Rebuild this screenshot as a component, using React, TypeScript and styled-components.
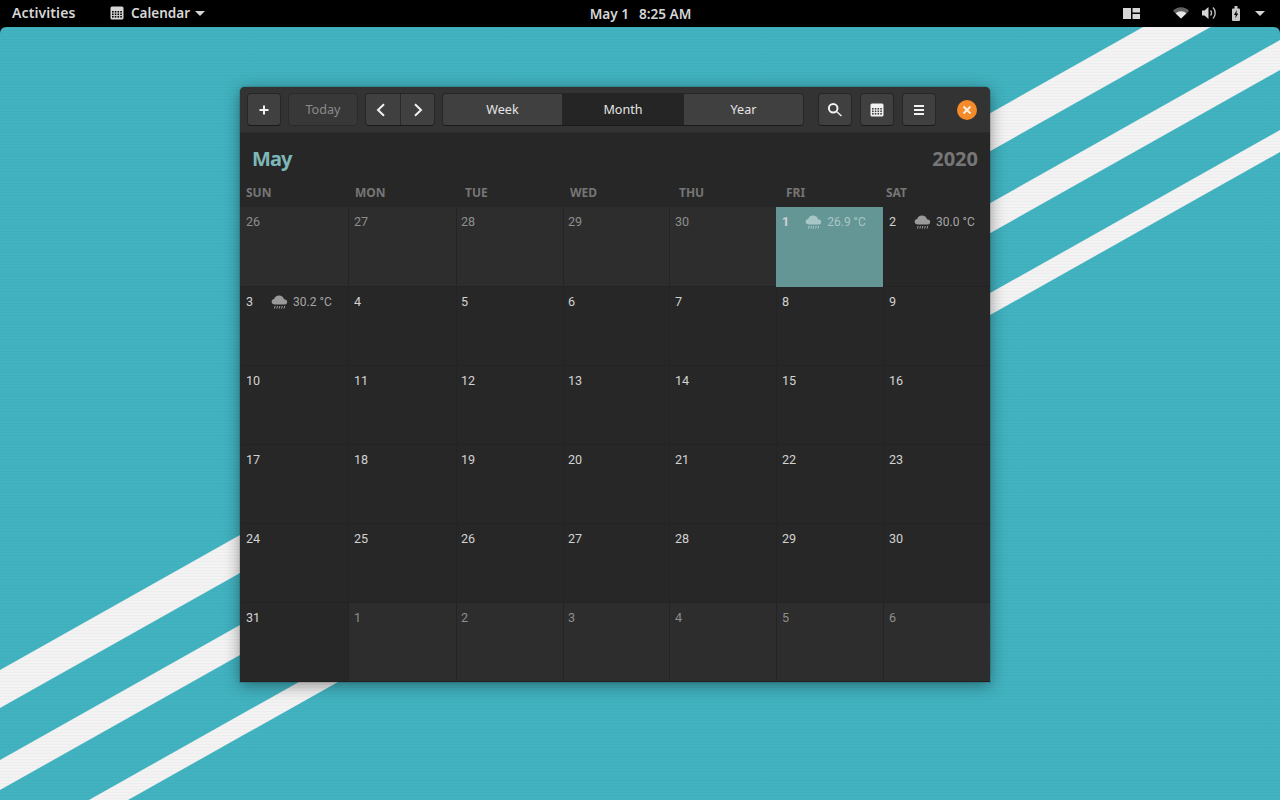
import React from 'react';
import styled, { createGlobalStyle } from 'styled-components';

const Global = createGlobalStyle`
  html, body { margin: 0; padding: 0; height: 100%; background: #000; }
  #root { height: 100%; }
  * { box-sizing: border-box; }
`;

const FONT = `"Noto Sans", "Open Sans", sans-serif`;
const COLUMNS = '108px 108px 107px 106px 107px 107px 107px';

const Screen = styled.div`
  width: 1280px;
  height: 800px;
  display: flex;
  flex-direction: column;
  overflow: hidden;
  background: #000;
  font-family: ${FONT};
`;

const TopBar = styled.header`
  height: 27px;
  flex: none;
  display: grid;
  grid-template-columns: 1fr auto 1fr;
  align-items: center;
  padding: 0 15px 1px 12px;
  color: #d6d6d6;
  font-size: 13.5px;
  font-weight: 600;
`;

const BarLeft = styled.div`
  display: flex;
  align-items: center;
`;

const Activities = styled.span`
  width: 98px;
  font-size: 14px;
  line-height: 18px;
  margin-bottom: 1px;
  letter-spacing: 0.1px;
`;

const AppMenu = styled.span`
  display: flex;
  align-items: center;
`;

const AppName = styled.span`
  margin: 0 5px 0 7px;
`;

const Clock = styled.div`
  display: flex;
  gap: 10px;
  margin-left: 4px;
  font-size: 13.6px;
`;

const BarRight = styled.div`
  display: flex;
  align-items: center;
  justify-content: flex-end;
`;

const Tray = styled.span<{ $gap: number }>`
  display: flex;
  margin-right: ${(p) => p.$gap}px;
`;

const Desktop = styled.main`
  flex: 1;
  position: relative;
  overflow: hidden;
  border-radius: 6px 6px 0 0;
  background: #41b2c0;
  padding: 60px 0 0 240px;
`;

const Wallpaper = styled.svg`
  position: absolute;
  inset: 0;
  width: 100%;
  height: 100%;
`;

const Weave = styled.div`
  position: absolute;
  inset: 0;
  background: repeating-linear-gradient(
    180deg,
    rgba(0, 0, 0, 0.025) 0 1px,
    rgba(255, 255, 255, 0.008) 1px 3px
  );
`;

const Window = styled.section`
  position: relative;
  width: 750px;
  height: 595px;
  display: flex;
  flex-direction: column;
  background: #272727;
  border-radius: 5px 5px 0 0;
  box-shadow: 0 3px 16px rgba(0, 0, 0, 0.42), 0 0 0 1px rgba(0, 0, 0, 0.12);
  overflow: hidden;
`;

const HeaderBar = styled.div`
  height: 46px;
  flex: none;
  display: flex;
  align-items: center;
  padding: 0 0 0 7px;
  background: #333333;
  border-bottom: 1px solid #2d2d2d;
`;

const ToolButton = styled.button<{ $w?: number; $disabled?: boolean }>`
  width: ${(p) => p.$w ?? 34}px;
  height: 33px;
  flex: none;
  padding: 0 0 1px;
  display: flex;
  align-items: center;
  justify-content: center;
  border-radius: 4px;
  border: 1px solid ${(p) => (p.$disabled ? '#2b2b2b' : '#262626')};
  border-bottom-color: ${(p) => (p.$disabled ? '#2b2b2b' : '#1a1a1a')};
  background: ${(p) => (p.$disabled ? '#383838' : '#404040')};
  color: ${(p) => (p.$disabled ? '#8a8a8a' : '#e6e6e6')};
  font: 400 12.6px ${FONT};
`;

const IconButton = styled(ToolButton)`
  padding: 0;
`;

const Joined = styled.div<{ $w: number }>`
  width: ${(p) => p.$w}px;
  height: 33px;
  flex: none;
  display: flex;
  border-radius: 4px;
  border: 1px solid #262626;
  border-bottom-color: #1a1a1a;
  overflow: hidden;
`;

const NavButton = styled.button<{ $nudge: number }>`
  width: 34px;
  flex: none;
  padding: 0 ${(p) => p.$nudge}px 0 0;
  display: flex;
  align-items: center;
  justify-content: center;
  border: 0;
  background: #404040;
  & + & {
    border-left: 1px solid #2a2a2a;
  }
`;

const StackButton = styled.button<{ $active?: boolean; $w: number }>`
  width: ${(p) => p.$w}px;
  padding: 0 0 1px;
  border: 0;
  background: ${(p) => (p.$active ? '#252525' : '#404040')};
  color: #e4e4e4;
  font: 400 12.6px ${FONT};
`;

const Gap = styled.span<{ $w: number }>`
  width: ${(p) => p.$w}px;
  flex: none;
`;

const CloseButton = styled.button`
  width: 20px;
  height: 20px;
  margin-left: 21px;
  padding: 0;
  border: 0;
  border-radius: 50%;
  background: #f48a2a;
  display: flex;
  align-items: center;
  justify-content: center;
`;

const TitleRow = styled.div`
  height: 50px;
  flex: none;
  display: flex;
  justify-content: space-between;
  align-items: center;
  padding: 0 12px;
  font-size: 20px;
  font-weight: 700;
`;

const Month = styled.span`
  color: #7db8b8;
  letter-spacing: -0.9px;
`;

const Year = styled.span`
  color: #767676;
`;

const WeekHeader = styled.div`
  height: 24px;
  flex: none;
  display: grid;
  grid-template-columns: ${COLUMNS};
  align-items: center;
  padding-bottom: 5px;
  font-size: 12px;
  font-weight: 700;
  color: #767676;
`;

const WeekLabel = styled.span<{ $inset: number }>`
  padding-left: ${(p) => p.$inset}px;
`;

const Grid = styled.div`
  flex: 1;
  display: grid;
  grid-template-columns: ${COLUMNS};
  grid-template-rows: 80px repeat(5, 79px);
`;

const Cell = styled.div<{ $outside?: boolean; $today?: boolean; $first?: boolean; $pad: number }>`
  min-width: 0;
  display: flex;
  align-items: flex-start;
  padding: 7px 0 0 ${(p) => p.$pad}px;
  font-family: Roboto, ${FONT};
  font-size: 12.6px;
  line-height: 16px;
  color: ${(p) => (p.$outside ? '#8d8d8d' : '#d2d2d2')};
  background: ${(p) => (p.$today ? '#659696' : p.$outside ? '#2d2d2d' : '#272727')};
  border-bottom: 1px solid ${(p) => (p.$today ? '#659696' : '#232323')};
  border-left: 1px solid ${(p) => (p.$today ? '#659696' : p.$first ? 'transparent' : '#242424')};
  font-weight: ${(p) => (p.$today ? 700 : 400)};
`;

const Weather = styled.span<{ $today?: boolean }>`
  display: flex;
  align-items: center;
  gap: 5px;
  margin-left: ${(p) => (p.$today ? 16 : 18)}px;
  font-size: 12px;
  font-weight: 400;
  color: ${(p) => (p.$today ? '#a9c6c6' : '#a6a6a6')};
`;

const CalendarGlyph = ({ size, color, hole }: { size: number; color: string; hole: string }) => (
  <svg width={size} height={size} viewBox="0 0 14 14">
    <rect x="0.5" y="0.5" width="13" height="13" rx="1.5" fill={color} />
    {[5, 7.5, 10].map((y) =>
      [2, 4.75, 7.5, 10.25].map((x) => <rect key={`${x}${y}`} x={x} y={y} width="1.6" height="1.6" fill={hole} />)
    )}
  </svg>
);

const Caret = () => (
  <svg width="10" height="5" viewBox="0 0 10 5">
    <path d="M0 0h10L5 5z" fill="#d6d6d6" />
  </svg>
);

const RainCloud = ({ color }: { color: string }) => (
  <svg width="17" height="16" viewBox="0 0 17 16">
    <path
      d="M4 10.6C2 10.6.6 9.4.6 7.8c0-1.5 1.2-2.6 2.6-2.7C3.7 3 5.6 1.6 8 1.6c2.5 0 4.5 1.5 5 3.6 1.7 0 3.2 1.1 3.2 2.7 0 1.6-1.4 2.7-3.2 2.7z"
      fill={color}
    />
    {[3.2, 5.6, 8, 10.4, 12.8].map((x) => (
      <path key={x} d={`M${x + 0.9} 12l-.7 2.6`} stroke={color} strokeWidth="1" />
    ))}
  </svg>
);

const Chevron = ({ dir }: { dir: 'l' | 'r' }) => (
  <svg width="12" height="14" viewBox="0 0 12 14">
    <path
      d={dir === 'l' ? 'M9 1.2 3 7l6 5.8' : 'M3 1.2 9 7l-6 5.8'}
      fill="none"
      stroke="#f0f0f0"
      strokeWidth="2"
    />
  </svg>
);

type Day = { n: number; outside?: boolean; today?: boolean; temp?: string };

const prev = [26, 27, 28, 29, 30].map((n) => ({ n, outside: true } as Day));
const days: Day[] = [
  ...prev,
  { n: 1, today: true, temp: '26.9 °C' },
  { n: 2, temp: '30.0 °C' },
  { n: 3, temp: '30.2 °C' },
  ...Array.from({ length: 27 }, (_, i) => ({ n: i + 4 })),
  { n: 31 },
  ...[1, 2, 3, 4, 5, 6].map((n) => ({ n, outside: true })),
];

const labels: [string, number][] = [
  ['SUN', 6],
  ['MON', 7],
  ['TUE', 9],
  ['WED', 7],
  ['THU', 10],
  ['FRI', 10],
  ['SAT', 3],
];

const cellPads = [5, 5, 4, 4, 5, 5, 5];

const stripes = [
  [670, 708],
  [760, 790],
  [850, 872],
];

export default function App() {
  return (
    <Screen>
      <Global />
      <TopBar>
        <BarLeft>
          <Activities>Activities</Activities>
          <AppMenu>
            <CalendarGlyph size={14} color="#d6d6d6" hole="#000" />
            <AppName>Calendar</AppName>
            <Caret />
          </AppMenu>
        </BarLeft>
        <Clock>
          <span>May 1</span>
          <span>8:25 AM</span>
        </Clock>
        <BarRight>
          <Tray $gap={33}>
            <svg width="17" height="11" viewBox="0 0 17 11">
              <path d="M0 0h8v11H0zM9.5 0H17v4.500H9.500zM9.500 6H17v5H9.500z" fill="#d6d6d6" />
            </svg>
          </Tray>
          <Tray $gap={13}>
            <svg width="16" height="12" viewBox="0 0 16 12">
              <path d="M8 11.5 0 4C2 1.6 4.8.3 8 .3s6 1.3 8 3.7z" fill="#d6d6d6" opacity="0.45" />
              <path d="M8 11.5 2.7 6.5C4 5 5.9 4.2 8 4.2s4 .8 5.3 2.3z" fill="#e6e6e6" />
            </svg>
          </Tray>
          <Tray $gap={15}>
            <svg width="15" height="16" viewBox="0 0 15 16">
              <path d="M0 5.500h2.500L6.500 2v12l-4-3.500H0z" fill="#d6d6d6" />
              <path d="M8.500 5.500a3.500 3.500 0 0 1 0 5" stroke="#bdbdbd" strokeWidth="1.400" fill="none" />
              <path d="M11 2.500a8 8 0 0 1 0 11" stroke="#bdbdbd" strokeWidth="1.400" fill="none" />
            </svg>
          </Tray>
          <Tray $gap={15}>
            <svg width="8" height="15" viewBox="0 0 8 15">
              <path d="M2.500 0h3v2.500H7a1 1 0 0 1 1 1V14a1 1 0 0 1-1 1H1a1 1 0 0 1-1-1V3.500a1 1 0 0 1 1-1h1.500z" fill="#c8c8c8" />
              <path d="M4.800 4 2 9h1.800L3.300 12.500 6.200 7.600H4.400z" fill="#000" />
            </svg>
          </Tray>
          <Caret />
        </BarRight>
      </TopBar>
      <Desktop>
        <Wallpaper viewBox="0 27 1280 773">
          {stripes.map(([a, b]) => (
            <polygon key={a} points={`0,${a} 1280,${a - 720} 1280,${b - 720} 0,${b}`} fill="#f3f3f3" />
          ))}
        </Wallpaper>
        <Weave />
        <Window>
          <HeaderBar>
            <IconButton>
              <svg width="12" height="12" viewBox="0 0 12 12">
                <path d="M6 1.5v9M1.5 6h9" stroke="#f2f2f2" strokeWidth="2" />
              </svg>
            </IconButton>
            <Gap $w={7} />
            <ToolButton $w={70} $disabled>Today</ToolButton>
            <Gap $w={7} />
            <Joined $w={70}>
              <NavButton $nudge={4}><Chevron dir="l" /></NavButton>
              <NavButton $nudge={0}><Chevron dir="r" /></NavButton>
            </Joined>
            <Gap $w={7} />
            <Joined $w={362}>
              <StackButton $w={119}>Week</StackButton>
              <StackButton $w={122} $active>Month</StackButton>
              <StackButton $w={119}>Year</StackButton>
            </Joined>
            <Gap $w={14} />
            <IconButton>
              <svg width="16" height="16" viewBox="0 0 16 16">
                <circle cx="6.2" cy="6.2" r="4.3" fill="none" stroke="#f2f2f2" strokeWidth="2" />
                <path d="M9.8 9.8l4.7 4.2" stroke="#f2f2f2" strokeWidth="1.4" />
              </svg>
            </IconButton>
            <Gap $w={8} />
            <IconButton>
              <CalendarGlyph size={14} color="#f2f2f2" hole="#404040" />
            </IconButton>
            <Gap $w={8} />
            <IconButton>
              <svg width="12" height="12" viewBox="0 0 12 12">
                <path d="M1 2h10M1 6h10M1 10h10" stroke="#f2f2f2" strokeWidth="2" />
              </svg>
            </IconButton>
            <CloseButton>
              <svg width="10" height="10" viewBox="0 0 10 10">
                <path d="M1.5 1.5l7 7M8.5 1.5l-7 7" stroke="#fff" strokeWidth="1.8" opacity="0.9" />
              </svg>
            </CloseButton>
          </HeaderBar>
          <TitleRow>
            <Month>May</Month>
            <Year>2020</Year>
          </TitleRow>
          <WeekHeader>
            {labels.map(([t, inset]) => (
              <WeekLabel key={t} $inset={inset}>{t}</WeekLabel>
            ))}
          </WeekHeader>
          <Grid>
            {days.map((d, i) => (
              <Cell
                key={i}
                $outside={d.outside}
                $today={d.today}
                $first={i % 7 === 0}
                $pad={cellPads[i % 7]}
              >
                {d.n}
                {d.temp && (
                  <Weather $today={d.today}>
                    <RainCloud color={d.today ? '#a9c6c6' : '#9a9a9a'} />
                    {d.temp}
                  </Weather>
                )}
              </Cell>
            ))}
          </Grid>
        </Window>
      </Desktop>
    </Screen>
  );
}
